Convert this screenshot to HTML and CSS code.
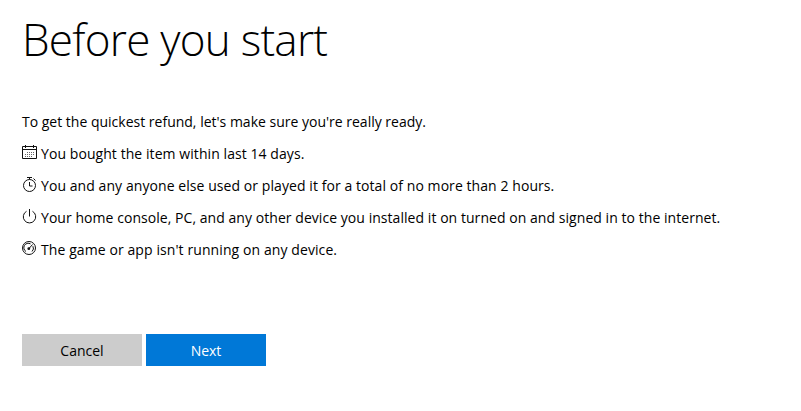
FILE: index.html
```html
<!DOCTYPE html>
<html lang="en">
<head>
    <meta charset="UTF-8">
    <meta name="viewport" content="width=device-width, initial-scale=1.0">
    <title>Before you start</title>
    <link rel="stylesheet" href="styles.css">
</head>
<body>
    <main class="container">
        <h1>Before you start</h1>
        <p class="intro">To get the quickest refund, let's make sure you're really ready.</p>

        <ul class="checklist">
            <li>
                <!-- Calendar -->
                <svg class="icon" viewBox="0 0 15 15">
                    <path d="M.5 1.5h14v12H.5zM.5 4.5h14M3.5 0v3M11.5 0v3"/>
                    <path class="dots" d="M5 7.5h8M3 9.5h10M3 11.5h8" stroke-dasharray="1 1"/>
                </svg>
                <span class="bought">You bought the item within last 14 days.</span>
            </li>
            <li>
                <!-- Stopwatch -->
                <svg class="icon" viewBox="0 0 15 15">
                    <circle cx="7.5" cy="8.5" r="6"/>
                    <path d="M5 .5h5M7.5 .5v2M11.5 1.5l2 2M7.5 5v4h3"/>
                </svg>
                <span class="played">You and any anyone else used or played it for a total of no more than 2 hours.</span>
            </li>
            <li>
                <!-- Power -->
                <svg class="icon" viewBox="0 0 15 15">
                    <path d="M7.5 0v7.5M4.5 2.3a6.2 6.2 0 1 0 6 0"/>
                </svg>
                <span class="signed-in">Your home console, PC, and any other device you installed it on turned on and signed in to the internet.</span>
            </li>
            <li>
                <!-- Gauge -->
                <svg class="icon" viewBox="0 0 15 15">
                    <circle cx="7" cy="7" r="6.5"/>
                    <path d="M4 10.5a4.4 4.4 0 0 1 4.5-7.6M10.9 5.2a4.4 4.4 0 0 1-.9 5.3M7 7.5l3.5-4"/>
                    <circle class="hub" cx="6.8" cy="7.7" r="1.4"/>
                </svg>
                <span class="running">The game or app isn't running on any device.</span>
            </li>
        </ul>

        <div class="actions">
            <button class="button cancel">Cancel</button>
            <button class="button next">Next</button>
        </div>
    </main>
</body>
</html>
```

FILE: styles.css
```css
* {
    margin: 0;
    padding: 0;
    box-sizing: border-box;
}

body {
    font-family: 'Segoe UI', 'Open Sans', sans-serif;
    font-size: 14px;
    line-height: 20px;
    background-color: #fff;
    color: #000;
}

.container {
    padding: 10px 22px;
}

h1 {
    height: 56px;
    margin-bottom: 46px;
    font-size: 44px;
    font-weight: 300;
    line-height: 58px;
    letter-spacing: -0.75px;
    white-space: nowrap;
}

.intro {
    margin-bottom: 12px;
    white-space: nowrap;
}

.checklist {
    list-style: none;
}

.checklist li {
    display: flex;
    align-items: center;
    gap: 4px;
    height: 20px;
    margin-bottom: 12px;
    white-space: nowrap;
}

.bought,
.played {
    letter-spacing: 0.07px;
}

.signed-in {
    letter-spacing: 0.05px;
}

.running {
    letter-spacing: 0.09px;
}

.icon {
    flex: none;
    width: 15px;
    height: 15px;
    margin-bottom: 3px;
    fill: none;
    stroke: #111;
    stroke-width: 1;
}

.icon .dots {
    stroke: #666;
}

.icon .hub {
    fill: #111;
    stroke: none;
}

.actions {
    display: flex;
    gap: 4px;
    padding-top: 62px;
}

.button {
    width: 120px;
    height: 32px;
    border: none;
    font-family: inherit;
    font-size: 14px;
    background-color: #ccc;
    color: #000;
    cursor: pointer;
}

.next {
    background-color: #0078d7;
    color: #fff;
}
```
